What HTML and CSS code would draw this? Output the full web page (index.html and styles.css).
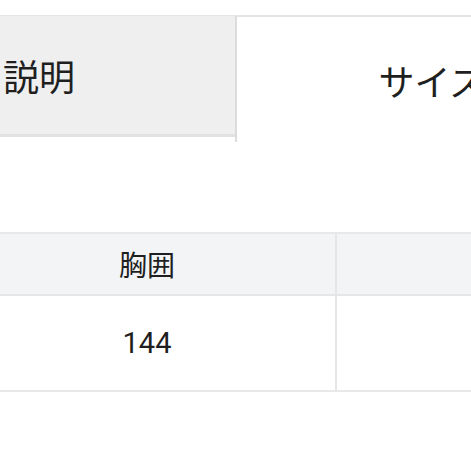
FILE: index.html
```html
<!DOCTYPE html>
<html lang="ja">
<head>
<meta charset="utf-8">
<link rel="stylesheet" href="styles.css">
</head>
<body>
<div class="page">
  <div class="tabs">
    <div class="tab tab-inactive">説明</div>
    <div class="tab tab-active">サイズ</div>
  </div>
  <div class="size-table">
    <div class="cell head">胸囲</div>
    <div class="cell head col-last"></div>
    <div class="cell body-cell">144</div>
    <div class="cell body-cell col-last"></div>
  </div>
</div>
</body>
</html>
```
FILE: styles.css
```css
html, body {
  margin: 0;
  padding: 0;
}
body {
  width: 471px;
  height: 471px;
  overflow: hidden;
  background: #ffffff;
  color: #1f1f1f;
  font-family: Roboto, "Noto Sans CJK JP", sans-serif;
}
.page {
  padding-top: 15px;
}
.tabs {
  display: flex;
  align-items: flex-start;
  margin-left: -157px;
}
.tab {
  flex: none;
  width: 392px;
  box-sizing: border-box;
  display: flex;
  align-items: center;
  justify-content: center;
  font-family: "Noto Sans CJK JP", sans-serif;
  font-size: 36px;
}
.tab-inactive {
  height: 122px;
  background: #efefef;
  border-top: 1px solid #e6e6e6;
  border-bottom: 3px solid #e2e2e2;
}
.tab-active {
  height: 127px;
  background: #ffffff;
  border-top: 2px solid #e4e4e4;
  border-left: 2px solid #dcdcdc;
}
.size-table {
  margin-top: 90px;
  margin-left: -41px;
  display: grid;
  grid-template-columns: 376px 376px;
  border-top: 2px solid #e8e8e8;
}
.cell {
  box-sizing: border-box;
  display: flex;
  align-items: center;
  justify-content: center;
}
.head {
  height: 62px;
  background: #f3f4f6;
  border-bottom: 2px solid #e6e6e6;
  font-family: "Noto Sans CJK JP", sans-serif;
  font-size: 28px;
}
.body-cell {
  height: 96px;
  border-bottom: 2px solid #e8e8e8;
  font-size: 29px;
}
.col-last {
  border-left: 2px solid #e6e6e6;
}
```
